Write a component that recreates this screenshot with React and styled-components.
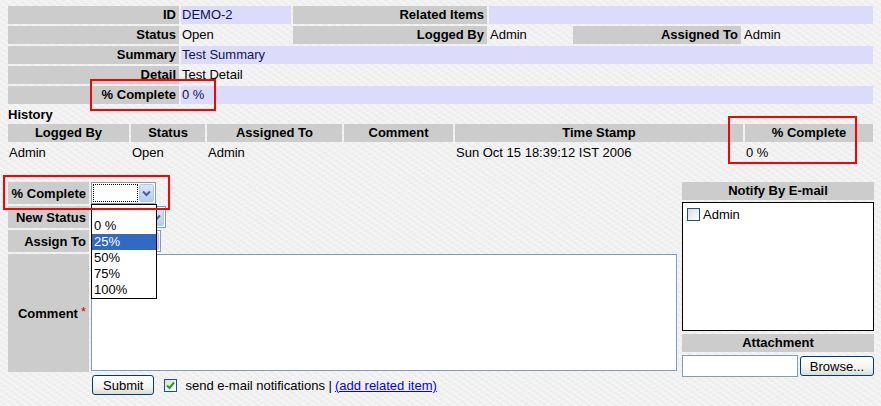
import React from "react";
import styled, { createGlobalStyle } from "styled-components";

const GlobalStyle = createGlobalStyle`
  html, body {
    margin: 0;
    padding: 0;
    background: #f0f0f0;
  }
  body {
    font-family: "Liberation Sans", Arial, sans-serif;
    font-size: 13px;
    color: #000;
  }
`;

const Page = styled.div`
  position: relative;
  width: 881px;
  height: 406px;
  padding: 4px 6px 0 6px;
  box-sizing: border-box;
  overflow: hidden;
  background-color: #f0f0f0;
  background-image: repeating-linear-gradient(
      35deg,
      rgba(255, 255, 255, 0.35) 0 2px,
      transparent 2px 5px
    ),
    repeating-linear-gradient(
      -25deg,
      rgba(0, 0, 0, 0.018) 0 1px,
      transparent 1px 4px
    );
`;

const DataTable = styled.table`
  border-collapse: separate;
  border-spacing: 2px;
  table-layout: fixed;
  width: 869px;
  font-size: 13px;
`;

const Col = styled.col`
  width: ${(p) => p.$w}px;
`;

const Label = styled.th`
  background: #cccccc;
  font-weight: bold;
  text-align: right;
  padding: 0 3px 0 0;
  height: 18px;
  line-height: 16px;
  white-space: nowrap;
  overflow: hidden;
`;

const Value = styled.td`
  background: ${(p) => (p.$tint ? "#dcdcfa" : "transparent")};
  color: ${(p) => (p.$tint ? "#10105a" : "#000")};
  padding: 0 0 0 1px;
  height: 18px;
  line-height: 16px;
  white-space: nowrap;
`;

const HeadCell = styled.th`
  background: #cccccc;
  font-weight: bold;
  text-align: center;
  padding: 0;
  height: 18px;
  line-height: 16px;
`;

const Cell = styled.td`
  padding: 0 0 0 1px;
  height: 18px;
  line-height: 16px;
  white-space: nowrap;
`;

const SectionTitle = styled.div`
  font-weight: bold;
  margin: 1px 0 0 2px;
  height: 15px;
  line-height: 15px;
`;

const FormArea = styled.div`
  display: grid;
  grid-template-columns: 669px 192px;
  column-gap: 5px;
  margin: 18px 0 0 2px;
  align-items: start;
`;

const FormGrid = styled.div`
  display: grid;
  grid-template-columns: 81px 586px;
  grid-template-rows: 22px 22px 22px 118px auto;
  column-gap: 2px;
  row-gap: 2px;
`;

const FormLabel = styled.div`
  background: #cccccc;
  font-weight: bold;
  display: flex;
  align-items: center;
  justify-content: flex-end;
  padding-right: 3px;
  white-space: nowrap;
`;

const Required = styled.span`
  color: #e00000;
  font-weight: normal;
  margin-left: 3px;
  position: relative;
  top: -2px;
`;

const Field = styled.div`
  position: relative;
  display: flex;
  align-items: flex-start;
`;

const SelectBox = styled.div`
  width: ${(p) => p.$w}px;
  height: 22px;
  box-sizing: border-box;
  border: 1px solid #7f9db9;
  background: #fff;
  display: flex;
  align-items: stretch;
  padding: 1px;
  gap: 1px;
`;

const SelectValue = styled.div`
  flex: 1;
  border: 1px ${(p) => (p.$focus ? "dotted #000" : "solid transparent")};
`;

const SelectButton = styled.div`
  width: 15px;
  box-sizing: border-box;
  border: 1px solid #b2c6ee;
  border-radius: 2px;
  background: linear-gradient(#dbe6fd, #b6cbf7);
  display: flex;
  align-items: center;
  justify-content: center;
`;

const DropList = styled.ul`
  position: absolute;
  left: 0;
  top: 22px;
  width: 66px;
  box-sizing: border-box;
  margin: 0;
  padding: 13px 0 0 0;
  list-style: none;
  background: #fff;
  border: 1px solid #000;
  z-index: 5;
`;

const DropItem = styled.li`
  height: 16px;
  line-height: 16px;
  padding-left: 2px;
  background: ${(p) => (p.$active ? "#316ac5" : "#fff")};
  color: ${(p) => (p.$active ? "#fff" : "#000")};
`;

const TextArea = styled.div`
  width: 586px;
  height: 117px;
  box-sizing: border-box;
  border: 1px solid #7f9db9;
  background: #fff;
`;

const Actions = styled.div`
  grid-column: 2;
  display: flex;
  align-items: center;
  margin-top: 1px;
  padding-left: 1px;
  gap: 10px;
`;

const Button = styled.button`
  font-family: "Liberation Sans", Arial, sans-serif;
  font-size: 13px;
  height: ${(p) => p.$h || 20}px;
  padding: 0 ${(p) => p.$pad || 10}px;
  border: 1px solid #003c74;
  border-radius: 3px;
  background: linear-gradient(#ffffff, #f3f3ef 60%, #dcdcd4);
  color: #000;
`;

const Check = styled.span`
  width: 13px;
  height: 13px;
  box-sizing: border-box;
  border: 1px solid #1c5180;
  background: linear-gradient(135deg, #dcdcd7, #ffffff);
  display: inline-flex;
  align-items: center;
  justify-content: center;
  flex: none;
`;

const Notice = styled.span`
  display: flex;
  align-items: center;
  gap: 8px;
`;

const Link = styled.a`
  color: #0000ff;
  text-decoration: underline;
  margin-left: 3px;
`;

const SideColumn = styled.div`
  display: flex;
  flex-direction: column;
`;

const SideHeader = styled.div`
  background: #cccccc;
  font-weight: bold;
  text-align: center;
  height: 18px;
  line-height: 17px;
  margin-bottom: ${(p) => p.$gap || 0}px;
`;

const NotifyBox = styled.div`
  height: 129px;
  margin: 2px 0 3px 0;
  box-sizing: border-box;
  border: 1px solid #000;
  background: #fff;
  padding: 4px 0 0 4px;
`;

const CheckRow = styled.label`
  display: flex;
  align-items: center;
  gap: 3px;
`;

const FileRow = styled.div`
  display: flex;
  align-items: center;
  gap: 2px;
`;

const FileInput = styled.div`
  width: 116px;
  height: 22px;
  box-sizing: border-box;
  border: 1px solid #7f9db9;
  background: #fff;
`;

const Marker = styled.div`
  position: absolute;
  left: ${(p) => p.$x}px;
  top: ${(p) => p.$y}px;
  width: ${(p) => p.$w}px;
  height: ${(p) => p.$h}px;
  box-sizing: border-box;
  border: 2px solid #ff0000;
  z-index: 10;
  pointer-events: none;
`;

const Chevron = () => (
  <svg width="9" height="7" viewBox="0 0 9 7">
    <path d="M1 1.5 L4.5 5 L8 1.5" fill="none" stroke="#4d6185" strokeWidth="2" />
  </svg>
);

const Tick = () => (
  <svg width="9" height="9" viewBox="0 0 9 9">
    <path d="M1 4.5 L3.5 7 L8 1.5" fill="none" stroke="#21a121" strokeWidth="2" />
  </svg>
);

function Select({ width, focus }) {
  return (
    <SelectBox $w={width}>
      <SelectValue $focus={focus} />
      <SelectButton>
        <Chevron />
      </SelectButton>
    </SelectBox>
  );
}

const percentOptions = ["0 %", "25%", "50%", "75%", "100%"];

const history = [
  {
    loggedBy: "Admin",
    status: "Open",
    assignedTo: "Admin",
    comment: "",
    time: "Sun Oct 15 18:39:12 IST 2006",
    complete: "0 %",
  },
];

export default function App() {
  return (
    <Page>
      <GlobalStyle />
      <DataTable>
        <colgroup>
          <Col $w={171} />
          <Col $w={110} />
          <Col $w={194} />
          <Col $w={82} />
          <Col $w={168} />
          <Col $w={130} />
        </colgroup>
        <tbody>
          <tr>
            <Label>ID</Label>
            <Value $tint>DEMO-2</Value>
            <Label>Related Items</Label>
            <Value $tint colSpan={3}></Value>
          </tr>
          <tr>
            <Label>Status</Label>
            <Value>Open</Value>
            <Label>Logged By</Label>
            <Value>Admin</Value>
            <Label>Assigned To</Label>
            <Value>Admin</Value>
          </tr>
          <tr>
            <Label>Summary</Label>
            <Value $tint colSpan={5}>Test Summary</Value>
          </tr>
          <tr>
            <Label>Detail</Label>
            <Value colSpan={5}>Test Detail</Value>
          </tr>
          <tr>
            <Label>% Complete</Label>
            <Value $tint colSpan={5}>0 %</Value>
          </tr>
        </tbody>
      </DataTable>

      <SectionTitle>History</SectionTitle>
      <DataTable>
        <colgroup>
          <Col $w={121} />
          <Col $w={74} />
          <Col $w={135} />
          <Col $w={109} />
          <Col $w={288} />
          <Col $w={128} />
        </colgroup>
        <thead>
          <tr>
            <HeadCell>Logged By</HeadCell>
            <HeadCell>Status</HeadCell>
            <HeadCell>Assigned To</HeadCell>
            <HeadCell>Comment</HeadCell>
            <HeadCell>Time Stamp</HeadCell>
            <HeadCell>% Complete</HeadCell>
          </tr>
        </thead>
        <tbody>
          {history.map((h, i) => (
            <tr key={i}>
              <Cell>{h.loggedBy}</Cell>
              <Cell>{h.status}</Cell>
              <Cell>{h.assignedTo}</Cell>
              <Cell>{h.comment}</Cell>
              <Cell>{h.time}</Cell>
              <Cell>{h.complete}</Cell>
            </tr>
          ))}
        </tbody>
      </DataTable>

      <FormArea>
        <FormGrid>
          <FormLabel>% Complete</FormLabel>
          <Field>
            <Select width={65} focus />
            <DropList>
              {percentOptions.map((o) => (
                <DropItem key={o} $active={o === "25%"}>
                  {o}
                </DropItem>
              ))}
            </DropList>
          </Field>
          <FormLabel>New Status</FormLabel>
          <Field>
            <Select width={75} />
          </Field>
          <FormLabel>Assign To</FormLabel>
          <Field>
            <Select width={70} />
          </Field>
          <FormLabel>
            Comment<Required>*</Required>
          </FormLabel>
          <Field>
            <TextArea />
          </Field>
          <Actions>
            <Button>Submit</Button>
            <Notice>
              <Check>
                <Tick />
              </Check>
              <span>
                send e-mail notifications |<Link href="#">(add related item)</Link>
              </span>
            </Notice>
          </Actions>
        </FormGrid>

        <SideColumn>
          <SideHeader>Notify By E-mail</SideHeader>
          <NotifyBox>
            <CheckRow>
              <Check />
              Admin
            </CheckRow>
          </NotifyBox>
          <SideHeader $gap={3}>Attachment</SideHeader>
          <FileRow>
            <FileInput />
            <Button $h={20} $pad={9}>Browse...</Button>
          </FileRow>
        </SideColumn>
      </FormArea>

      <Marker $x={90} $y={79} $w={126} $h={32} />
      <Marker $x={728} $y={116} $w={129} $h={48} />
      <Marker $x={3} $y={175} $w={167} $h={35} />
    </Page>
  );
}
